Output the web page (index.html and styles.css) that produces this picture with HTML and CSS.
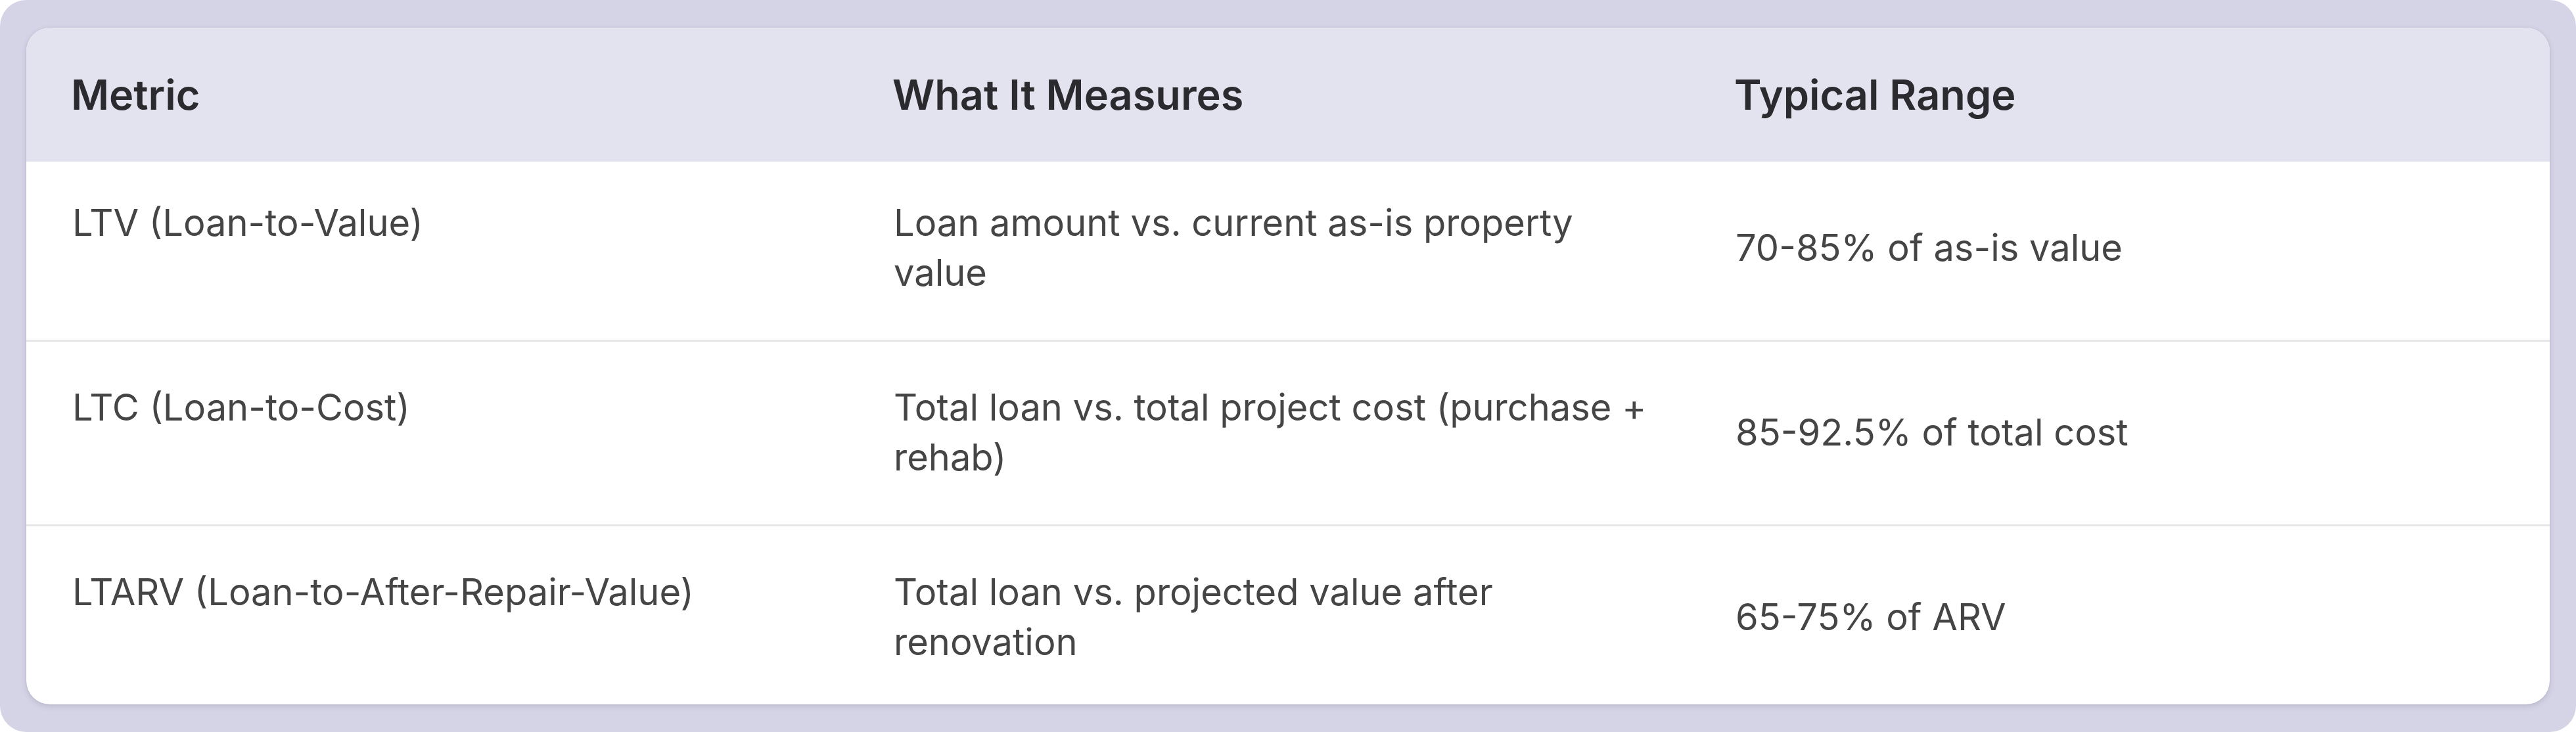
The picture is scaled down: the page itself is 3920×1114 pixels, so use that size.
FILE: index.html
```html
<!DOCTYPE html>
<html lang="en">
<head>
<meta charset="utf-8">
<title>Loan Metrics</title>
<link rel="stylesheet" href="styles.css">
</head>
<body>
<div class="frame">
  <div class="card">
    <table class="metrics">
      <colgroup>
        <col class="c1">
        <col class="c2">
        <col class="c3">
      </colgroup>
      <thead>
        <tr>
          <th>Metric</th>
          <th>What It Measures</th>
          <th>Typical Range</th>
        </tr>
      </thead>
      <tbody>
        <tr>
          <td class="metric">LTV (Loan-to-Value)</td>
          <td class="desc">Loan amount vs. current as-is property value</td>
          <td class="range">70-85% of as-is value</td>
        </tr>
        <tr>
          <td class="metric">LTC (Loan-to-Cost)</td>
          <td class="desc">Total loan vs. total project cost (purchase + rehab)</td>
          <td class="range">85-92.5% of total cost</td>
        </tr>
        <tr>
          <td class="metric">LTARV (Loan-to-After-Repair-Value)</td>
          <td class="desc">Total loan vs. projected value after renovation</td>
          <td class="range">65-75% of ARV</td>
        </tr>
      </tbody>
    </table>
  </div>
</div>
</body>
</html>
```

FILE: styles.css
```css
html, body {
  margin: 0;
  padding: 0;
  background: #ffffff;
}

body {
  font-family: "Inter", "Noto Sans", "Liberation Sans", sans-serif;
}

.frame {
  box-sizing: border-box;
  width: 3920px;
  height: 1114px;
  background: #d5d3e6;
  border-radius: 40px;
  padding: 42px 40px;
}

.card {
  background: #ffffff;
  border-radius: 36px;
  overflow: hidden;
  box-shadow: 0 3px 8px rgba(60, 60, 80, 0.16), 0 0 2px rgba(60, 60, 80, 0.18);
}

.metrics {
  width: 3840px;
  border-collapse: collapse;
  table-layout: fixed;
}

.c1 { width: 1250px; }
.c2 { width: 1281px; }
.c3 { width: 1309px; }

.metrics thead tr {
  background: #e3e2ef;
}

.metrics th {
  text-align: left;
  font-size: 63px;
  font-weight: 600;
  line-height: 90px;
  color: #2b2a2f;
  padding: 57px 40px 57px 68px;
  vertical-align: middle;
}

.metrics td {
  font-size: 56px;
  font-weight: 400;
  line-height: 76px;
  color: #454545;
  padding: 62px 40px 64px 70px;
}

.metrics tbody tr + tr td {
  border-top: 3px solid #e6e6e8;
}

.metrics tbody tr:first-child td {
  padding-top: 55px;
}

.metrics tbody tr:last-child td {
  padding-bottom: 57px;
}

.metric,
.desc {
  vertical-align: top;
}

.range {
  vertical-align: middle;
}
```
